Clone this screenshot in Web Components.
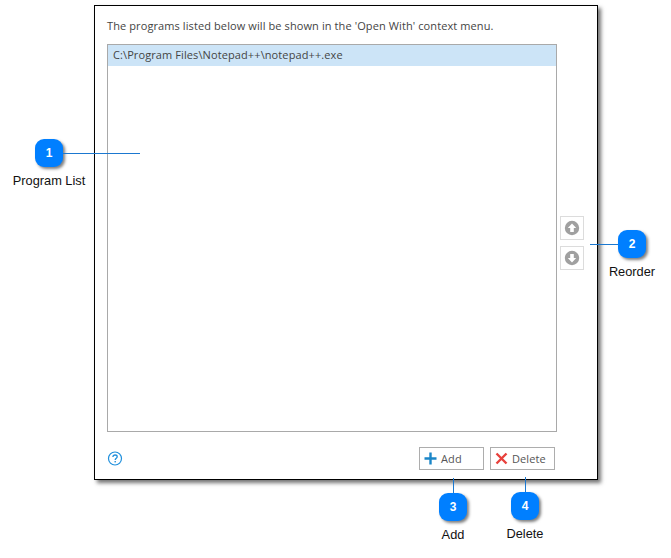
<!DOCTYPE html>
<html>
<head>
<meta charset="utf-8">
<style>
    html, body { margin: 0; padding: 0; background: #fff; }
    body { width: 671px; height: 558px; overflow: hidden; }
</style>
</head>
<body>
<help-figure>
    <dialog-window></dialog-window>
    <call-out n="1" label="Program List" x="35" y="139" line="right" len="77"></call-out>
    <call-out n="2" label="Reorder" x="618" y="230" line="left" len="28"></call-out>
    <call-out n="3" label="Add" x="439" y="493" line="up" len="15"></call-out>
    <call-out n="4" label="Delete" x="511" y="492" line="up" len="15"></call-out>
</help-figure>

<script>
class HelpFigure extends HTMLElement {
    constructor() {
        super();
        this.attachShadow({ mode: 'open' });
    }

    connectedCallback() {
        this.shadowRoot.innerHTML = `
            <style>
                :host {
                    display: block;
                    position: relative;
                    width: 671px;
                    height: 558px;
                    box-sizing: border-box;
                    padding: 5px 0 0 94px;
                }
            </style>
            <slot></slot>
        `;
    }
}

class DialogWindow extends HTMLElement {
    constructor() {
        super();
        this.attachShadow({ mode: 'open' });
    }

    connectedCallback() {
        this.shadowRoot.innerHTML = `
            <style>
                :host {
                    display: flex;
                    flex-direction: column;
                    box-sizing: border-box;
                    width: 504px;
                    height: 475px;
                    padding: 0 12px 8px 12px;
                    background: #fff;
                    border: 1px solid #000;
                    box-shadow: 3px 3px 4px rgba(0, 0, 0, 0.55);
                    font: 11px "Open Sans", sans-serif;
                    letter-spacing: 0.1px;
                    color: #444;
                }

                .intro {
                    height: 38px;
                    line-height: 40px;
                    white-space: nowrap;
                }

                .middle {
                    display: flex;
                    gap: 3px;
                }

                .list {
                    box-sizing: border-box;
                    width: 450px;
                    height: 388px;
                    padding: 0;
                    border: 1px solid #a9a9a9;
                }

                .item {
                    height: 21px;
                    line-height: 20px;
                    padding-left: 5px;
                    background: #cce4f7;
                }

                .reorder {
                    display: flex;
                    flex-direction: column;
                    gap: 6px;
                    padding-top: 172px;
                }

                .footer {
                    display: flex;
                    align-items: center;
                    margin-top: 15px;
                    padding-right: 30px;
                }

                .help {
                    margin-right: auto;
                    display: block;
                }
            </style>
            <div class="intro">The programs listed below will be shown in the 'Open With' context menu.</div>
            <div class="middle">
                <div class="list">
                    <div class="item">C:\\Program Files\\Notepad++\\notepad++.exe</div>
                </div>
                <div class="reorder">
                    <arrow-button dir="up"></arrow-button>
                    <arrow-button dir="down"></arrow-button>
                </div>
            </div>
            <div class="footer">
                <svg class="help" width="16" height="16" viewBox="0 0 16 16" fill="none">
                    <circle cx="8" cy="7.5" r="6.5" stroke="#1f8fdc" stroke-width="1.2"/>
                    <path d="M5.9 6 C6 4.6 6.9 4 8.1 4 C9.4 4 10.2 4.8 10.2 5.8 C10.2 7.2 8.2 7.3 8.2 9" stroke="#1f8fdc" stroke-width="1.3"/>
                    <rect x="7.5" y="10" width="1.4" height="1.4" fill="#1f8fdc"/>
                </svg>
                <action-button icon="add">Add</action-button>
                <action-button icon="delete" style="margin-left:6px">Delete</action-button>
            </div>
        `;
    }
}

class ArrowButton extends HTMLElement {
    constructor() {
        super();
        this.attachShadow({ mode: 'open' });
    }

    connectedCallback() {
        const arrow = this.getAttribute('dir') === 'up'
            ? 'M8 3.6 L12.2 8 H9.8 V12 H6.2 V8 H3.8 Z'
            : 'M8 12.4 L12.2 8 H9.8 V4 H6.2 V8 H3.8 Z';
        this.shadowRoot.innerHTML = `
            <style>
                :host {
                    display: flex;
                    align-items: center;
                    justify-content: center;
                    box-sizing: border-box;
                    width: 24px;
                    height: 24px;
                    border: 1px solid #dcdcdc;
                }
            </style>
            <svg width="16" height="16" viewBox="0 0 16 16">
                <circle cx="8" cy="8" r="7.2" fill="#a0a0a0"/>
                <path d="${arrow}" fill="#fff"/>
            </svg>
        `;
    }
}

class ActionButton extends HTMLElement {
    constructor() {
        super();
        this.attachShadow({ mode: 'open' });
    }

    connectedCallback() {
        const icon = this.getAttribute('icon') === 'add'
            ? '<path d="M6.5 0.5 V12.5 M0.5 6.5 H12.5" stroke="#1b86c8" stroke-width="2.4" fill="none"/>'
            : '<path d="M1.5 1.5 L11.5 11.5 M11.5 1.5 L1.5 11.5" stroke="#e8413c" stroke-width="2.4" fill="none"/>';
        this.shadowRoot.innerHTML = `
            <style>
                :host {
                    display: flex;
                    align-items: center;
                    gap: 4px;
                    box-sizing: border-box;
                    width: 65px;
                    height: 23px;
                    padding-left: 4px;
                    border: 1px solid #adadad;
                    color: #555;
                }
            </style>
            <svg width="13" height="13" viewBox="0 0 13 13">${icon}</svg>
            <slot></slot>
        `;
    }
}

// numbered marker: badge, leader line and caption, placed on the figure by attributes
class CallOut extends HTMLElement {
    constructor() {
        super();
        this.attachShadow({ mode: 'open' });
    }

    connectedCallback() {
        const side = this.getAttribute('line');
        const len = this.getAttribute('len');
        this.style.left = this.getAttribute('x') + 'px';
        this.style.top = this.getAttribute('y') + 'px';
        let line = `width:${len}px;height:1px;top:14px;left:28px;`;
        if (side === 'left') line = `width:${len}px;height:1px;top:14px;right:28px;`;
        if (side === 'up') line = `width:1px;height:${len}px;left:14px;bottom:28px;`;
        this.shadowRoot.innerHTML = `
            <style>
                :host {
                    position: absolute;
                    width: 28px;
                    height: 28px;
                }

                .badge {
                    width: 28px;
                    height: 28px;
                    border-radius: 9px;
                    background: #007fff;
                    box-shadow: 2px 2px 3px rgba(0, 0, 0, 0.5);
                    color: #fff;
                    font: bold 12px/28px "Liberation Sans", sans-serif;
                    text-align: center;
                }

                .line {
                    position: absolute;
                    background: #1b78d0;
                }

                .label {
                    position: absolute;
                    top: 34px;
                    left: 50%;
                    transform: translateX(-50%);
                    white-space: nowrap;
                    font: 12.8px/15px "Liberation Sans", sans-serif;
                    color: #111;
                }
            </style>
            <div class="line" style="${line}"></div>
            <div class="badge">${this.getAttribute('n')}</div>
            <div class="label">${this.getAttribute('label')}</div>
        `;
    }
}

customElements.define('help-figure', HelpFigure);
customElements.define('dialog-window', DialogWindow);
customElements.define('arrow-button', ArrowButton);
customElements.define('action-button', ActionButton);
customElements.define('call-out', CallOut);
</script>
</body>
</html>
